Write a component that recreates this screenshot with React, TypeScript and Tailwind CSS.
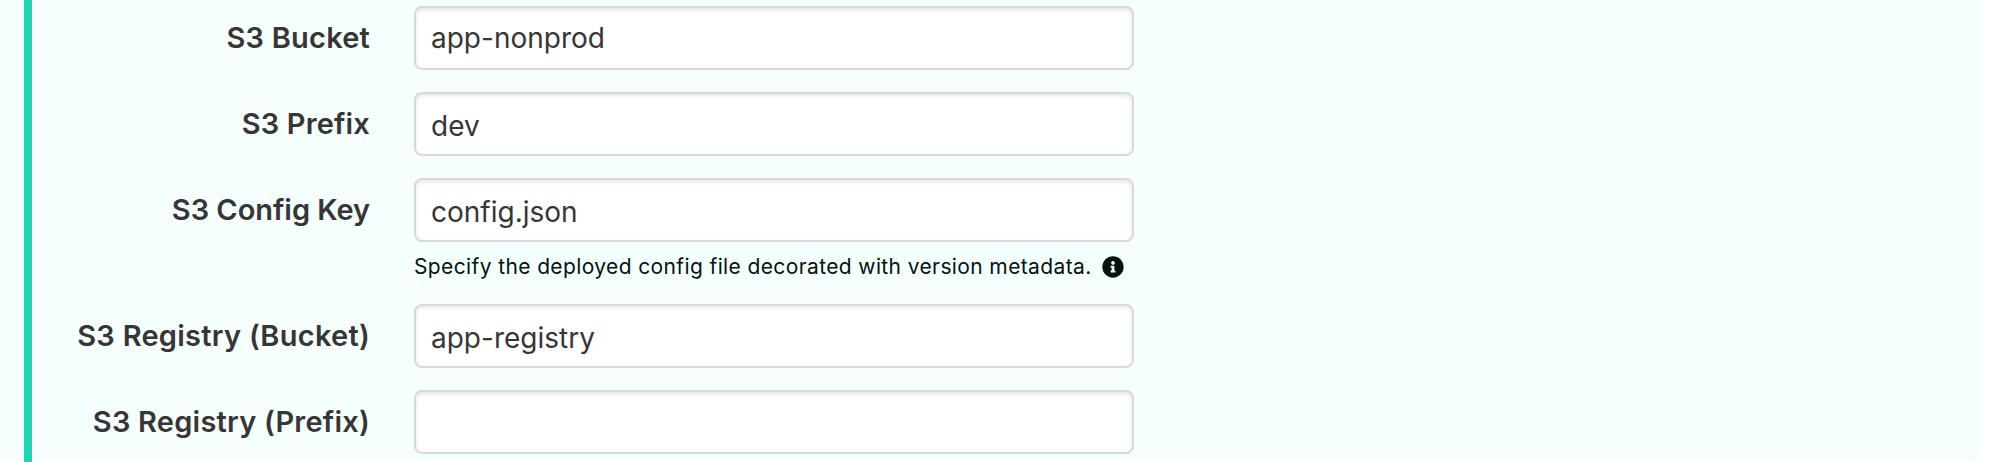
import React from "react";

type Row = { label: string; value: string; h: string; track: string; nudge: string; help?: string };

const rows: Row[] = [
  { label: "S3 Bucket", value: "app-nonprod", h: "h-[86px]", track: "tracking-[0.2px]", nudge: "pt-0" },
  { label: "S3 Prefix", value: "dev", h: "h-[86px]", track: "tracking-[0.15px]", nudge: "pt-[4px]" },
  { label: "S3 Config Key", value: "config.json", h: "h-[126px]", track: "tracking-[-0.05px]", nudge: "pt-[4px]", help: "Specify the deployed config file decorated with version metadata." },
  { label: "S3 Registry (Bucket)", value: "app-registry", h: "h-[86px]", track: "tracking-[0.26px]", nudge: "pt-[4px]" },
  { label: "S3 Registry (Prefix)", value: "", h: "h-[66px]", track: "tracking-[0.22px]", nudge: "pt-[4px]" },
];

export default function App() {
  return (
    <div className="h-[462px] overflow-hidden bg-white pr-[14px] font-['Inter',sans-serif]">
      <div className="h-full bg-[#f5fffe] pl-[24px]">
        <div className="h-full border-l-[8px] border-[#22d3b3] pt-[6px]">
          {rows.map((r) => (
            <div key={r.label} className={`flex ${r.h}`}>
              <div className={`mr-[44px] w-[338px] whitespace-nowrap pt-[10px] text-right text-[29px] font-semibold leading-[44px] text-[#373536] ${r.track}`}>{r.label}</div>
              <div>
                <div className={`flex h-[64px] w-[720px] items-center rounded-[8px] border-2 border-[#dad9da] bg-white pl-[15px] text-[28px] text-[#373536] shadow-[inset_0_2px_4px_rgba(0,0,0,0.1)] ${r.nudge}`}>{r.value}</div>
                {r.help && (
                  <div className="flex items-center pt-[8px] text-[21px] leading-[34px] tracking-[0.38px] text-[#04130f]">
                    <span className="whitespace-nowrap">{r.help}</span>
                    <svg className="-mt-[1px] ml-[10px] h-[22px] w-[22px]" fill="currentColor" viewBox="0 0 512 512"><path d="M256 8C119 8 8 119 8 256s111 248 248 248 248-111 248-248S393 8 256 8zm0 110c23.200 0 42 18.800 42 42s-18.800 42-42 42-42-18.800-42-42 18.800-42 42-42zm56 254c0 6.600-5.400 12-12 12h-88c-6.600 0-12-5.400-12-12v-24c0-6.600 5.400-12 12-12h12v-64h-12c-6.600 0-12-5.400-12-12v-24c0-6.600 5.400-12 12-12h64c6.600 0 12 5.400 12 12v100h12c6.600 0 12 5.400 12 12v24z" /></svg>
                  </div>
                )}
              </div>
            </div>
          ))}
        </div>
      </div>
    </div>
  );
}
